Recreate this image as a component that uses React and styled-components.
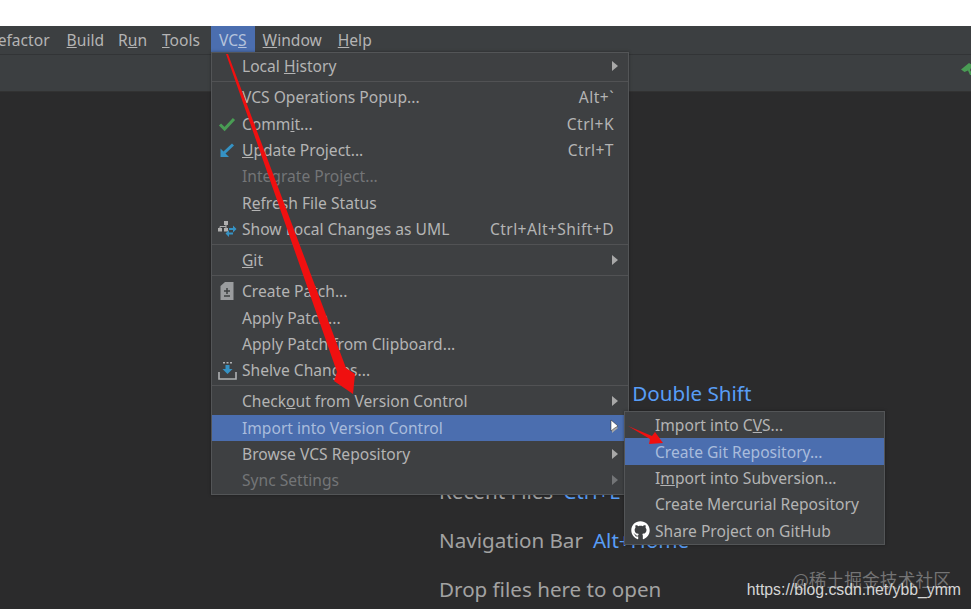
import React from 'react'
import styled, { createGlobalStyle } from 'styled-components'
import { FaGithub } from 'react-icons/fa'

const Global = createGlobalStyle`
  html, body { margin: 0; padding: 0; background: #fff; }
  body { font-family: "Noto Sans", "Open Sans", sans-serif; }
`

const Page = styled.div`
  position: relative;
  width: 971px;
  height: 609px;
  overflow: hidden;
  display: flex;
  flex-direction: column;
  background: #fff;
`

const TopGap = styled.div`
  height: 26px;
  flex: none;
`

const MenuBar = styled.div`
  height: 28px;
  flex: none;
  display: flex;
  align-items: stretch;
  background: #3c3f41;
  overflow: hidden;
  font-size: 15.6px;
  color: #b4b4b4;
`

const ClippedItem = styled.div`
  display: flex;
  align-items: center;
  margin-left: -12px;
  padding-right: 9px;
`

const BarItem = styled.div`
  display: flex;
  align-items: center;
  padding: 0 ${p => p.$right ?? 8}px 0 8px;
  background: ${p => (p.$active ? '#4b6eaf' : 'transparent')};
  color: ${p => (p.$active ? '#b5c3dc' : 'inherit')};
`

const Toolbar = styled.div`
  height: 37px;
  flex: none;
  background: #3c3f41;
  border-top: 1px solid #323436;
  box-sizing: border-box;
  display: flex;
  justify-content: flex-end;
  align-items: center;
  overflow: hidden;
`

const HammerIcon = styled.svg`
  flex: none;
  margin: 0 -5px 8px 0;
`

const Editor = styled.div`
  flex: 1;
  background: #2b2b2c;
  border-top: 1px solid #323232;
  box-sizing: border-box;
  padding: 276px 0 0 439px;
  display: flex;
  flex-direction: column;
`

const Hint = styled.div`
  height: 49px;
  flex: none;
  display: flex;
  align-items: center;
  gap: 10px;
  font-size: 20.6px;
  color: #a2a2a2;
  white-space: nowrap;
`

const Key = styled.span`
  color: #589df6;
`

const Menu = styled.div`
  position: absolute;
  left: ${p => p.$left}px;
  top: ${p => p.$top}px;
  width: ${p => p.$width}px;
  box-sizing: border-box;
  background: #3e4042;
  border: 1px solid #535557;
  display: flex;
  flex-direction: column;
  font-size: 15.6px;
  color: #b4b4b4;
  box-shadow: 0 0 3px rgba(0, 0, 0, 0.35);
`

const Row = styled.div`
  height: 26.35px;
  flex: none;
  display: grid;
  grid-template-columns: 30px 1fr auto 20px;
  align-items: center;
  white-space: nowrap;
  background: ${p => (p.$active ? '#4b6eaf' : 'transparent')};
  color: ${p => (p.$active ? '#a9bcdc' : p.$disabled ? '#737577' : 'inherit')};
`

const IconCell = styled.div`
  display: flex;
  justify-content: center;
  align-items: center;
  color: #fff;
`

const Shortcut = styled.span`
  margin-right: -6px;
  letter-spacing: 0.45px;
`

const ArrowCell = styled.div`
  display: flex;
  justify-content: center;
  margin-left: -6px;
`

const Separator = styled.div`
  height: 1px;
  flex: none;
  margin: 1.9px 0;
  background: #515254;
`

const Overlay = styled.svg`
  position: absolute;
  left: 0;
  top: 0;
  pointer-events: none;
`

const WatermarkCn = styled.div`
  position: absolute;
  right: 20px;
  top: 566px;
  font-family: "Noto Sans CJK SC", sans-serif;
  font-size: 17.8px;
  color: rgba(190, 190, 190, 0.5);
  white-space: nowrap;
`

const WatermarkUrl = styled.div`
  position: absolute;
  right: 10px;
  top: 581px;
  font-family: "Liberation Sans", Arial, sans-serif;
  font-size: 15.8px;
  color: #d6d6d6;
  white-space: nowrap;
`

const Tri = ({ dim }) => (
  <svg width="8" height="12" viewBox="0 0 8 12">
    <path d="M1 1l6 5-6 5z" fill={dim ? '#737577' : '#a8a8a8'} />
  </svg>
)

const CheckIcon = () => (
  <svg width="18" height="16" viewBox="0 0 18 16">
    <path d="M2 8.5l4.6 4.6L16 3" fill="none" stroke="#499c54" strokeWidth="3" />
  </svg>
)

const UpdateIcon = () => (
  <svg width="18" height="18" viewBox="0 0 18 18">
    <path d="M15 3.5L6 12" fill="none" stroke="#3592c4" strokeWidth="3" />
    <path d="M2.5 7.5v8.5h8.5z" fill="#3592c4" />
  </svg>
)

const DiffIcon = () => (
  <svg width="20" height="18" viewBox="0 0 20 18">
    <path d="M7 1h4v4H7zM1 8h4v3.5H1zM7 8h4v3.5H7z" fill="#b0b0b0" />
    <path d="M9 5v3M3 8V6.5h6" fill="none" stroke="#b0b0b0" strokeWidth="1" />
    <path d="M12 8h4V5.5l3.5 3.5-3.5 3.5V10h-4z" fill="#3592c4" />
    <path d="M16 12.5h-4V10L8.500 13.500 12 17v-2.500h4z" fill="#3592c4" />
  </svg>
)

const PatchIcon = () => (
  <svg width="14" height="18" viewBox="0 0 14 18">
    <path d="M0.500 4L5 0h8.500v18H0.500z" fill="#9a9c9e" />
    <path d="M7 6v6M4 9h6M4 14h6" stroke="#3e4042" strokeWidth="1.500" fill="none" />
  </svg>
)

const ShelveIcon = () => (
  <svg width="19" height="19" viewBox="0 0 19 19">
    <path d="M1 11v7h17v-7" fill="none" stroke="#afb1b3" strokeWidth="1.600" />
    <path d="M5 1h2v1.500H5zM8.500 1h2v1.500h-2zM12 1h2v1.500h-2z" fill="#afb1b3" />
    <path d="M7.500 4h4v4h3L9.500 13l-5-5h3z" fill="#3592c4" />
  </svg>
)

const vcsRows = [
  { label: <>Local <u>H</u>istory</>, arrow: true },
  'sep',
  { label: 'VCS Operations Popup...', shortcut: 'Alt+`' },
  { label: <>Comm<u>i</u>t...</>, shortcut: 'Ctrl+K', icon: <CheckIcon /> },
  { label: <><u>U</u>pdate Project...</>, shortcut: 'Ctrl+T', icon: <UpdateIcon /> },
  { label: 'Integrate Project...', disabled: true },
  { label: <>R<u>e</u>fresh File Status</> },
  { label: 'Show Local Changes as UML', shortcut: 'Ctrl+Alt+Shift+D', icon: <DiffIcon /> },
  'sep',
  { label: <><u>G</u>it</>, arrow: true },
  'sep',
  { label: 'Create Patch...', icon: <PatchIcon /> },
  { label: 'Apply Patch...' },
  { label: 'Apply Patch from Clipboard...' },
  { label: 'Shelve Changes...', icon: <ShelveIcon /> },
  'sep',
  { label: <>Check<u>o</u>ut from Version Control</>, arrow: true },
  { label: 'Import into Version Control', arrow: true, active: true },
  { label: 'Browse VCS Repository', arrow: true },
  { label: 'Sync Settings', arrow: true, disabled: true },
]

const importRows = [
  { label: <>Import into C<u>V</u>S...</> },
  { label: 'Create Git Repository...', active: true },
  { label: <>I<u>m</u>port into Subversion...</> },
  { label: 'Create Mercurial Repository' },
  { label: 'Share Project on GitHub', icon: <FaGithub size={19} /> },
]

const MenuRows = ({ rows }) =>
  rows.map((row, i) =>
    row === 'sep' ? (
      <Separator key={i} />
    ) : (
      <Row key={i} $active={row.active} $disabled={row.disabled}>
        <IconCell>{row.icon}</IconCell>
        <span>{row.label}</span>
        <Shortcut>{row.shortcut}</Shortcut>
        <ArrowCell>{row.arrow && <Tri dim={row.disabled} />}</ArrowCell>
      </Row>
    )
  )

const App = () => (
  <Page>
    <Global />
    <TopGap />
    <MenuBar>
      <ClippedItem>Refactor</ClippedItem>
      <BarItem $right={6}><span><u>B</u>uild</span></BarItem>
      <BarItem $right={7}><span>R<u>u</u>n</span></BarItem>
      <BarItem $right={11}><span><u>T</u>ools</span></BarItem>
      <BarItem $active><span>VC<u>S</u></span></BarItem>
      <BarItem><span><u>W</u>indow</span></BarItem>
      <BarItem><span><u>H</u>elp</span></BarItem>
    </MenuBar>
    <Toolbar>
      <HammerIcon width="15" height="12" viewBox="0 0 15 12">
        <path d="M0 6.500L8 0l7 4v3l-5-2-1 2 3 5h-3L7 7.500 3.500 9z" fill="#499c54" />
      </HammerIcon>
    </Toolbar>
    <Editor>
      <Hint>Search Everywhere <Key>Double Shift</Key></Hint>
      <Hint>Go to File <Key>Ctrl+Shift+N</Key></Hint>
      <Hint>Recent Files <Key>Ctrl+E</Key></Hint>
      <Hint>Navigation Bar <Key>Alt+Home</Key></Hint>
      <Hint>Drop files here to open</Hint>
    </Editor>
    <Menu $left={211} $top={52} $width={418}>
      <MenuRows rows={vcsRows} />
    </Menu>
    <Menu $left={624} $top={411} $width={261}>
      <MenuRows rows={importRows} />
    </Menu>
    <WatermarkCn>@稀土掘金技术社区</WatermarkCn>
    <WatermarkUrl>https://blog.csdn.net/ybb_ymm</WatermarkUrl>
    <Overlay width="971" height="609" viewBox="0 0 971 609">
      <path d="M226 54L228 54L346 368L355 374L353 394L334 381L337 372z" fill="#f01010" />
      <path d="M628 426L652 436L655 432L663 443L649 444L650 439z" fill="#f01010" />
      <path d="M611 420v11l3-2.500 4-2.500z" fill="#fff" stroke="#222" strokeWidth="0.500" />
    </Overlay>
  </Page>
)

export default App
